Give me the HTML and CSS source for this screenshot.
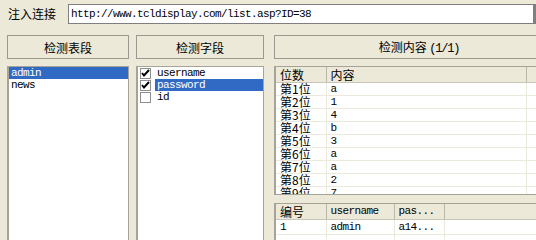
FILE: index.html
```html
<!DOCTYPE html>
<html lang="zh-CN">
<head>
    <meta charset="UTF-8">
    <title>注入检测</title>
    <link rel="stylesheet" href="styles.css">
</head>
<body>
    <div class="window">
        <div class="urlbar">
            <span class="label">注入连接</span>
            <div class="combo">
                <span class="combo-text mono">http://www.tcldisplay.com/list.asp?ID=38</span>
                <span class="combo-drop">&#9660;</span>
            </div>
        </div>

        <div class="panes">
            <!-- tables -->
            <div class="pane pane-tables">
                <button class="btn">检测表段</button>
                <ul class="listbox">
                    <li class="item selected mono">admin</li>
                    <li class="item mono">news</li>
                </ul>
            </div>

            <!-- fields -->
            <div class="pane pane-fields">
                <button class="btn">检测字段</button>
                <ul class="listbox">
                    <li class="check-item">
                        <span class="box"><svg width="9" height="9" viewBox="0 0 9 9"><path d="M1 4 L3 6.5 L8 1" fill="none" stroke="#000" stroke-width="2"/></svg></span>
                        <span class="item-text mono">username</span>
                    </li>
                    <li class="check-item">
                        <span class="box"><svg width="9" height="9" viewBox="0 0 9 9"><path d="M1 4 L3 6.5 L8 1" fill="none" stroke="#000" stroke-width="2"/></svg></span>
                        <span class="item-text selected mono">password</span>
                    </li>
                    <li class="check-item">
                        <span class="box"></span>
                        <span class="item-text mono">id</span>
                    </li>
                </ul>
            </div>

            <!-- content -->
            <div class="pane pane-content">
                <button class="btn">检测内容 <span class="paren">(1/1)</span></button>
                <div class="listview lv-chars">
                    <table>
                        <colgroup><col style="width:50px"><col style="width:200px"><col></colgroup>
                        <thead>
                            <tr><th>位数</th><th>内容</th><th></th></tr>
                        </thead>
                        <tbody>
                            <tr><td>第1位</td><td class="mono">a</td><td></td></tr>
                            <tr><td>第2位</td><td class="mono">1</td><td></td></tr>
                            <tr><td>第3位</td><td class="mono">4</td><td></td></tr>
                            <tr><td>第4位</td><td class="mono">b</td><td></td></tr>
                            <tr><td>第5位</td><td class="mono">3</td><td></td></tr>
                            <tr><td>第6位</td><td class="mono">a</td><td></td></tr>
                            <tr><td>第7位</td><td class="mono">a</td><td></td></tr>
                            <tr><td>第8位</td><td class="mono">2</td><td></td></tr>
                            <tr><td>第9位</td><td class="mono">7</td><td></td></tr>
                        </tbody>
                    </table>
                </div>
                <div class="listview lv-result">
                    <table>
                        <colgroup><col style="width:50px"><col style="width:68px"><col style="width:50px"><col></colgroup>
                        <thead>
                            <tr><th>编号</th><th class="mono">username</th><th class="mono">pas...</th><th></th></tr>
                        </thead>
                        <tbody>
                            <tr><td class="mono">1</td><td class="mono">admin</td><td class="mono">a14...</td><td></td></tr>
                            <tr><td></td><td></td><td></td><td></td></tr>
                        </tbody>
                    </table>
                </div>
            </div>
        </div>
    </div>
</body>
</html>
```

FILE: styles.css
```css
body {
    margin: 0;
    width: 536px;
    height: 240px;
    overflow: hidden;
    background-color: #ece9d8;
    font-family: "Noto Sans CJK SC", sans-serif;
    font-size: 12px;
    color: #000;
}

.window {
    width: 600px;
}

.mono {
    font-family: "Liberation Mono", "Noto Sans CJK SC", monospace;
    font-size: 11px;
    letter-spacing: -0.6px;
}

/* url bar */
.urlbar {
    display: flex;
    align-items: center;
    padding: 4px 0 0 8px;
}

.label {
    width: 60px;
    line-height: 20px;
}

.combo {
    display: flex;
    width: 478px;
    height: 18px;
    border: 1px solid #7f7f7f;
    background-color: #fff;
}

.combo-text {
    flex: 1;
    padding-left: 2px;
    line-height: 18px;
}

.combo-drop {
    width: 14px;
    background-color: #808080;
    font-size: 7px;
    line-height: 18px;
    text-align: center;
    color: #000;
}

/* columns */
.panes {
    display: flex;
    margin-top: 11px;
    padding-left: 7px;
}

.pane {
    display: flex;
    flex-direction: column;
}

.pane-tables {
    width: 122px;
    margin-right: 7px;
}

.pane-fields {
    width: 128px;
    margin-right: 10px;
}

.pane-content {
    width: 290px;
}

.btn {
    height: 24px;
    margin: 0;
    padding: 0;
    border: 1px solid #9b9a90;
    background-color: #ece9d8;
    font-family: "Noto Sans CJK SC", sans-serif;
    font-size: 12px;
    color: #000;
}

.btn .paren {
    font-family: "Liberation Mono", monospace;
    font-size: 12px;
    letter-spacing: -1.2px;
}

.listbox {
    height: 190px;
    margin: 7px 0 0;
    padding: 0;
    list-style: none;
    background-color: #fff;
    border: 1px solid #a5a497;
    border-left-width: 2px;
}

.item {
    height: 12px;
    line-height: 12px;
    padding-left: 2px;
}

.selected {
    background-color: #316ac5;
    color: #fff;
}

.check-item {
    display: flex;
    align-items: center;
    height: 12px;
}

.box {
    display: flex;
    width: 9px;
    height: 9px;
    margin: 0 4px 0 2px;
    border: 1px solid #8f8f8f;
    background-color: #fff;
}

.item-text {
    flex: 1;
    line-height: 12px;
    padding-left: 2px;
}

/* list views */
.listview {
    margin-top: 7px;
    background-color: #fff;
    border: 1px solid #a5a497;
    border-left-width: 2px;
    overflow: hidden;
}

.lv-chars {
    height: 127px;
}

.lv-result {
    margin-top: 8px;
    height: 60px;
}

.listview table {
    width: 100%;
    table-layout: fixed;
    border-collapse: collapse;
}

.listview th {
    height: 15px;
    padding: 0 0 0 4px;
    text-align: left;
    font-weight: normal;
    line-height: 15px;
    background-color: #ece9d8;
    border-right: 1px solid #b9b7aa;
    border-bottom: 1px solid #c8c6b8;
    overflow: hidden;
}

.listview td {
    height: 12px;
    padding: 0 0 0 4px;
    line-height: 12px;
    border-right: 1px solid #ebe9dc;
    border-bottom: 1px solid #ebe9dc;
    white-space: nowrap;
    overflow: hidden;
}

.lv-result td {
    height: 14px;
    line-height: 14px;
}
```
